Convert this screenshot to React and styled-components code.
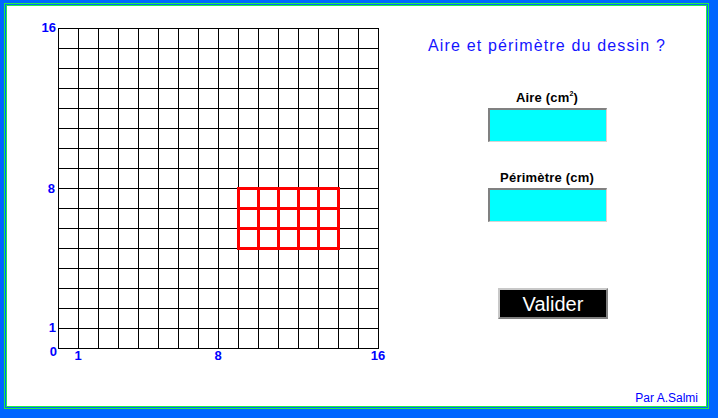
import React from "react";
import styled, { createGlobalStyle } from "styled-components";

const Global = createGlobalStyle`
  html, body { margin: 0; padding: 0; background: #ffffff; }
  #root { width: 718px; height: 418px; }
`;

const Frame = styled.div`
  box-sizing: border-box;
  width: 718px;
  height: 418px;
  background: #0066ff;
  padding: 3px 9px 9px 4px;
  display: flex;
`;

const Ring = styled.div`
  flex: 1;
  display: flex;
  border: 1px solid #22ee44;
  padding: 1px;
  background: #0066ff;
`;

const Panel = styled.div`
  flex: 1;
  display: flex;
  border: 1px solid #22ee44;
  background: #ffffff;
  font-family: "Liberation Sans", Arial, sans-serif;
`;

const GridSvg = styled.svg`
  display: block;
  flex: 0 0 393px;
  width: 393px;
  height: 365px;
`;

const AxisLabel = styled.text`
  font-family: "Liberation Sans", Arial, sans-serif;
  font-weight: bold;
  font-size: 13px;
  fill: #0000ff;
`;

const RightCol = styled.div`
  box-sizing: border-box;
  width: 306px;
  padding: 31px 12px 0 0;
  display: flex;
  flex-direction: column;
  align-items: center;
`;

const Title = styled.div`
  font-size: 16px;
  line-height: 18px;
  letter-spacing: 1.15px;
  color: #1414ff;
  white-space: nowrap;
`;

const Label = styled.div`
  margin-top: ${(p) => p.$top}px;
  font-size: 13px;
  line-height: 14px;
  font-weight: bold;
  letter-spacing: 0.2px;
  color: #000000;
  white-space: nowrap;
`;

const Sup = styled.sup`
  font-size: 7px;
  line-height: 0;
  vertical-align: 6px;
`;

const Field = styled.div`
  box-sizing: border-box;
  margin-top: 3px;
  width: 119px;
  height: 34px;
  background: #00ffff;
  border-style: solid;
  border-width: 2px 1px 1px 2px;
  border-color: #808080 #d4d4d4 #d4d4d4 #808080;
`;

const Button = styled.button`
  box-sizing: border-box;
  margin: 66px 0 0 12px;
  width: 110px;
  height: 31px;
  padding: 0;
  background: #000000;
  color: #ffffff;
  font-family: "Liberation Sans", Arial, sans-serif;
  font-size: 20px;
  line-height: 26px;
  border-style: solid;
  border-width: 2px;
  border-color: #c8c8c8 #808080 #808080 #c8c8c8;
  cursor: pointer;
`;

const Credit = styled.div`
  align-self: flex-end;
  margin: 72px -4px 0 0;
  font-size: 12px;
  line-height: 14px;
  color: #0000ff;
  white-space: nowrap;
`;

const cells = Array.from({ length: 17 }, (_, i) => i);
const X0 = 58;
const Y0 = 28;
const S = 20;

const leftLabels = [
  { t: "16", x: 56, y: 32 },
  { t: "8", x: 55, y: 193 },
  { t: "1", x: 56, y: 332 },
  { t: "0", x: 57, y: 356 },
];
const bottomLabels = [
  { t: "1", x: 78 },
  { t: "8", x: 218 },
  { t: "16", x: 378 },
];

function Grid() {
  return (
    <GridSvg viewBox="7 6 393 365">
      {cells.map((i) => (
        <line
          key={"v" + i}
          x1={X0 + i * S + 0.5}
          y1={Y0}
          x2={X0 + i * S + 0.5}
          y2={Y0 + 16 * S + 1}
          stroke="#000"
          strokeWidth="1"
        />
      ))}
      {cells.map((i) => (
        <line
          key={"h" + i}
          x1={X0}
          y1={Y0 + i * S + 0.5}
          x2={X0 + 16 * S + 1}
          y2={Y0 + i * S + 0.5}
          stroke="#000"
          strokeWidth="1"
        />
      ))}
      {[0, 1, 2, 3, 4, 5].map((i) => (
        <line
          key={"rv" + i}
          x1={238.5 + i * S}
          y1={187}
          x2={238.5 + i * S}
          y2={250}
          stroke="#ff0000"
          strokeWidth="3"
        />
      ))}
      {[0, 1, 2, 3].map((i) => (
        <line
          key={"rh" + i}
          x1={237}
          y1={188.5 + i * S}
          x2={340}
          y2={188.5 + i * S}
          stroke="#ff0000"
          strokeWidth="3"
        />
      ))}
      {leftLabels.map((l) => (
        <AxisLabel key={"l" + l.t} x={l.x} y={l.y} textAnchor="end">
          {l.t}
        </AxisLabel>
      ))}
      {bottomLabels.map((l) => (
        <AxisLabel key={"b" + l.t} x={l.x} y={360} textAnchor="middle">
          {l.t}
        </AxisLabel>
      ))}
    </GridSvg>
  );
}

export default function App() {
  return (
    <>
      <Global />
      <Frame>
        <Ring>
          <Panel>
            <Grid />
            <RightCol>
              <Title>Aire et périmètre du dessin ?</Title>
              <Label $top={36}>
                Aire (cm<Sup>2</Sup>)
              </Label>
              <Field />
              <Label $top={29}>Périmètre (cm)</Label>
              <Field />
              <Button type="button">Valider</Button>
              <Credit>Par A.Salmi</Credit>
            </RightCol>
          </Panel>
        </Ring>
      </Frame>
    </>
  );
}
